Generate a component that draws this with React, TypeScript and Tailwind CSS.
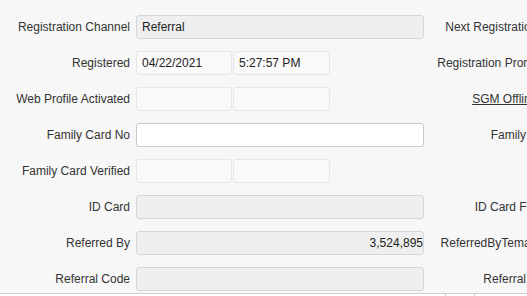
import React from "react";

type Field =
  | { kind: "disabled"; value?: string; align?: "left" | "right" }
  | { kind: "split"; a?: string; b?: string }
  | { kind: "input"; value?: string };

interface Row {
  label: string;
  field: Field;
  right?: string;
  rightLink?: boolean;
}

const rows: Row[] = [
  { label: "Registration Channel", field: { kind: "disabled", value: "Referral" }, right: "Next Registration Date" },
  { label: "Registered", field: { kind: "split", a: "04/22/2021", b: "5:27:57 PM" }, right: "Registration Promocode" },
  { label: "Web Profile Activated", field: { kind: "split" }, right: "SGM Offline Date", rightLink: true },
  { label: "Family Card No", field: { kind: "input" }, right: "Family Details" },
  { label: "Family Card Verified", field: { kind: "split" } },
  { label: "ID Card", field: { kind: "disabled" }, right: "ID Card File URL" },
  { label: "Referred By", field: { kind: "disabled", value: "3,524,895", align: "right" }, right: "ReferredByTemanCode" },
  { label: "Referral Code", field: { kind: "disabled" }, right: "Referral Details" },
];

const FieldBox: React.FC<{ field: Field }> = ({ field }) => {
  if (field.kind === "split") {
    return (
      <div className="flex gap-[1px]">
        <div className="w-[96px] h-[24px] border border-[#e6e6e6] bg-[#f9f9f9] rounded-[3px] pl-[5px] flex items-center text-[#222]">
          {field.a}
        </div>
        <div className="w-[97px] h-[24px] border border-[#e6e6e6] bg-[#f9f9f9] rounded-[3px] pl-[5px] flex items-center text-[#222]">
          {field.b}
        </div>
      </div>
    );
  }
  if (field.kind === "input") {
    return <div className="w-[288px] h-[24px] border border-[#c9c9c9] bg-white rounded-[3px]" />;
  }
  return (
    <div
      className={`w-[288px] h-[24px] border border-[#d6d6d6] bg-[#efefef] rounded-[3px] flex items-center text-[#222] ${
        field.align === "right" ? "justify-end" : "pl-[5px]"
      }`}
    >
      {field.value}
    </div>
  );
};

export default function App() {
  return (
    <div
      className="w-[527px] h-[296px] overflow-hidden bg-white text-[12px] text-[#333]"
      style={{ fontFamily: '"Liberation Sans", Arial, sans-serif' }}
    >
      <div className="h-[293px] bg-[#f7f7f7] pt-[15px] flex flex-col gap-[12px]">
        {rows.map((row) => (
          <div key={row.label} className="flex items-center h-[24px] w-[566px] shrink-0">
            <div className="w-[130px] text-right whitespace-nowrap">{row.label}</div>
            <div className="ml-[6px] w-[288px]">
              <FieldBox field={row.field} />
            </div>
            <div className={`w-[142px] text-right whitespace-nowrap ${row.rightLink ? "underline" : ""}`}>
              {row.right}
            </div>
          </div>
        ))}
      </div>
      <div className="flex h-[3px] border-t border-[#cfcfcf]">
        <div className="w-[445px]" />
        <div className="w-[29px] border-l border-[#cfcfcf]" />
        <div className="flex-1 border-l border-[#cfcfcf]" />
      </div>
    </div>
  );
}
